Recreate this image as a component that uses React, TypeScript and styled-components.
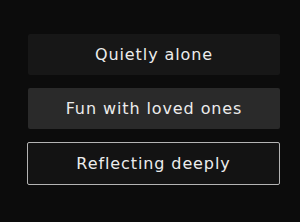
import React from 'react';
import styled, {createGlobalStyle} from 'styled-components';

const GlobalStyle = createGlobalStyle`
  html, body {
    margin: 0;
    padding: 0;
    background: #0c0c0c;
  }
`;

type Variant = 'dim' | 'raised' | 'selected';

const options: {label: string; variant: Variant}[] = [
    {label: 'Quietly alone', variant: 'dim'},
    {label: 'Fun with loved ones', variant: 'raised'},
    {label: 'Reflecting deeply', variant: 'selected'},
];

const App = () => {
    return (
        <>
            <GlobalStyle/>
            <Screen>
                <OptionList>
                    {options.map(o => (
                        <Option key={o.label} $variant={o.variant}>{o.label}</Option>
                    ))}
                </OptionList>
            </Screen>
        </>
    )
}

export default App;

const Screen = styled.div`
  width: 300px;
  height: 222px;
  background: #0c0c0c;
  padding: 34px 20px 0 28px;
  box-sizing: border-box;
`;

const OptionList = styled.div`
  display: flex;
  flex-direction: column;
  gap: 13px;
`;

const Option = styled.div<{$variant: Variant}>`
  height: 41px;
  box-sizing: border-box;
  display: flex;
  align-items: center;
  justify-content: center;
  border-radius: 2px;
  font-family: "DejaVu Sans", sans-serif;
  font-size: 16px;
  letter-spacing: 0.9px;
  color: #ececec;
  background: ${p => p.$variant === 'raised' ? '#2a2a2a' : p.$variant === 'selected' ? '#131313' : '#171717'};
  border: ${p => p.$variant === 'selected' ? '1.5px solid #b4b4b4' : 'none'};
  ${p => p.$variant === 'selected' && 'height: 43px; margin-left: -1px;'}
`;
